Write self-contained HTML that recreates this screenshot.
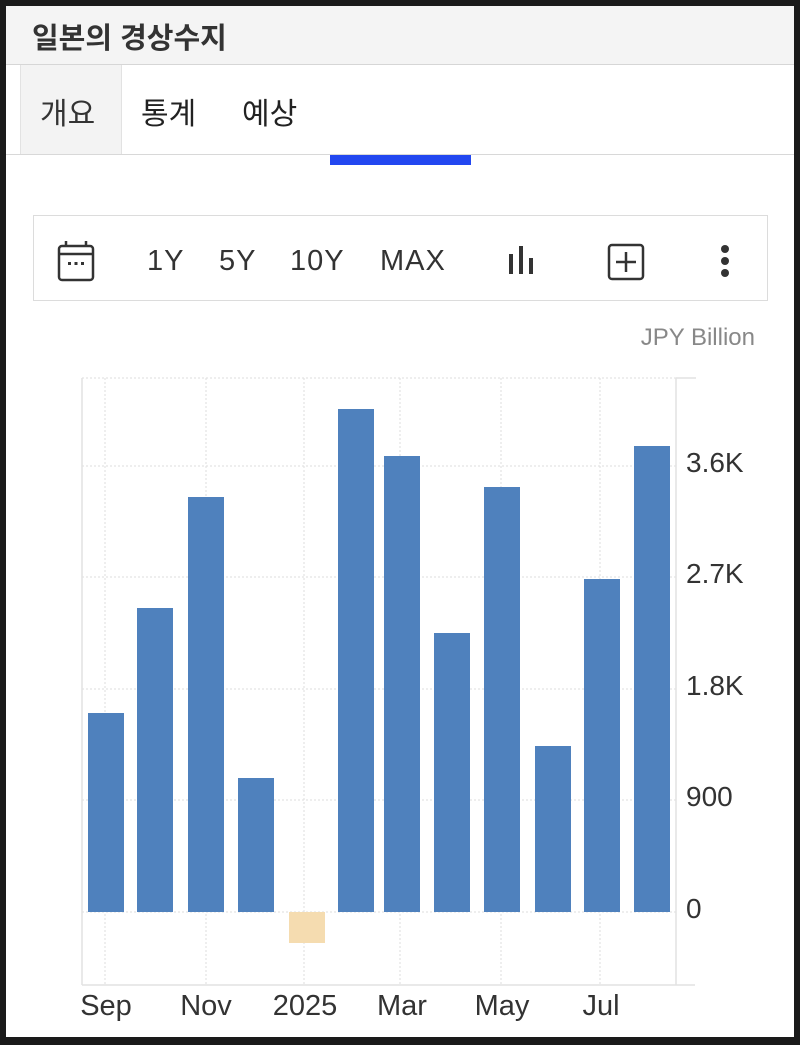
<!DOCTYPE html>
<html><head><meta charset="utf-8"><style>
html,body{margin:0;padding:0;}
body{width:800px;height:1045px;background:#1a1a1a;position:relative;overflow:hidden;font-family:"Liberation Sans","Noto Sans CJK KR",sans-serif;}
.page{position:absolute;left:6px;top:6px;width:788px;height:1031px;background:#fff;}
.title{position:absolute;left:0;top:0;width:788px;height:58px;background:#f4f4f4;border-bottom:1px solid #d6d6d6;}
.title span{position:absolute;left:26px;top:9px;font-size:29px;font-weight:bold;color:#333;}
.tabs{position:absolute;left:0;top:59px;width:788px;height:89px;border-bottom:1px solid #d8d8d8;}
.tab0{position:absolute;left:14px;top:0;width:100px;height:89px;background:#f3f3f3;border-left:1px solid #e2e2e2;border-right:1px solid #e2e2e2;}
.tabs span{position:absolute;top:24px;font-size:30px;color:#222;}
.ul{position:absolute;left:324px;top:149px;width:141px;height:10px;background:#2247f0;}
.tb{position:absolute;left:27px;top:209px;width:733px;height:84px;border:1px solid #dcdcdc;background:#fff;}
.tb span{position:absolute;top:29px;font-size:29px;color:#333;letter-spacing:1px;}
.chart{position:absolute;left:27px;top:294px;width:733px;height:740px;border-left:1px solid #eee;border-right:1px solid #eee;}
</style></head><body>
<div class="page">
<div class="title"><span>일본의 경상수지</span></div>
<div class="tabs"><div class="tab0"></div>
<span style="left:34px;color:#333">개요</span><span style="left:135px">통계</span><span style="left:236px">예상</span></div>
<div class="ul"></div>
<div class="tb">
<svg style="position:absolute;left:22px;top:24px" width="40" height="44" viewBox="0 0 40 44"><rect x="3" y="6" width="34" height="34" rx="3" fill="none" stroke="#333" stroke-width="2.5"/><line x1="3" y1="14" x2="37" y2="14" stroke="#333" stroke-width="2.5"/><line x1="10" y1="1" x2="10" y2="7" stroke="#333" stroke-width="2.5"/><line x1="30" y1="1" x2="30" y2="7" stroke="#333" stroke-width="2.5"/><rect x="12" y="22" width="3" height="3" fill="#333"/><rect x="18.5" y="22" width="3" height="3" fill="#333"/><rect x="25" y="22" width="3" height="3" fill="#333"/></svg>
<span style="left:113px">1Y</span><span style="left:185px">5Y</span><span style="left:256px">10Y</span><span style="left:346px">MAX</span>
<svg style="position:absolute;left:473px;top:30px" width="30" height="30" viewBox="0 0 30 30"><rect x="2" y="8" width="4" height="20" fill="#333"/><rect x="12" y="0" width="4" height="28" fill="#333"/><rect x="22" y="12" width="4" height="16" fill="#333"/></svg>
<svg style="position:absolute;left:573px;top:27px" width="38" height="38" viewBox="0 0 38 38"><rect x="2" y="2" width="34" height="34" rx="3" fill="none" stroke="#333" stroke-width="2.5"/><line x1="19" y1="9" x2="19" y2="29" stroke="#333" stroke-width="2.5"/><line x1="9" y1="19" x2="29" y2="19" stroke="#333" stroke-width="2.5"/></svg>
<svg style="position:absolute;left:685px;top:28px" width="12" height="34" viewBox="0 0 12 34"><circle cx="6" cy="5" r="4" fill="#333"/><circle cx="6" cy="17" r="4" fill="#333"/><circle cx="6" cy="29" r="4" fill="#333"/></svg>
</div>
</div>
<svg style="position:absolute;left:0;top:0" width="800" height="1045" viewBox="0 0 800 1045" font-family="Liberation Sans, sans-serif">
<g stroke="#ddd" stroke-width="1" stroke-dasharray="2,2">
<line x1="82" y1="378" x2="676" y2="378"/><line x1="82" y1="466" x2="676" y2="466"/><line x1="82" y1="577" x2="676" y2="577"/><line x1="82" y1="689" x2="676" y2="689"/><line x1="82" y1="800" x2="676" y2="800"/><line x1="82" y1="912" x2="676" y2="912"/>
<line x1="105" y1="378" x2="105" y2="985"/><line x1="206" y1="378" x2="206" y2="985"/><line x1="304" y1="378" x2="304" y2="985"/><line x1="400" y1="378" x2="400" y2="985"/><line x1="501" y1="378" x2="501" y2="985"/><line x1="600" y1="378" x2="600" y2="985"/>
</g>
<g stroke="#e2e2e2" stroke-width="1.5"><line x1="82" y1="378" x2="82" y2="985"/><line x1="676" y1="378" x2="676" y2="985"/><line x1="82" y1="985" x2="695" y2="985"/><line x1="676" y1="378" x2="696" y2="378"/></g>
<g fill="#4f81bd">
<rect x="88" y="713" width="36" height="199"/><rect x="137" y="608" width="36" height="304"/><rect x="188" y="497" width="36" height="415"/><rect x="238" y="778" width="36" height="134"/>
<rect x="338" y="409" width="36" height="503"/><rect x="384" y="456" width="36" height="456"/><rect x="434" y="633" width="36" height="279"/><rect x="484" y="487" width="36" height="425"/>
<rect x="535" y="746" width="36" height="166"/><rect x="584" y="579" width="36" height="333"/><rect x="634" y="446" width="36" height="466"/>
</g>
<rect x="289" y="912" width="36" height="31" fill="#f5dcb0"/>
<text x="755" y="345" text-anchor="end" font-size="24" fill="#888">JPY Billion</text>
<g font-size="28" fill="#333">
<text x="686" y="472">3.6K</text><text x="686" y="583">2.7K</text><text x="686" y="695">1.8K</text><text x="686" y="806">900</text><text x="686" y="918">0</text>
</g>
<g font-size="29" fill="#333" text-anchor="middle">
<text x="106" y="1015">Sep</text><text x="206" y="1015">Nov</text><text x="305" y="1015">2025</text><text x="402" y="1015">Mar</text><text x="502" y="1015">May</text><text x="601" y="1015">Jul</text>
</g>
</svg>
</body></html>
